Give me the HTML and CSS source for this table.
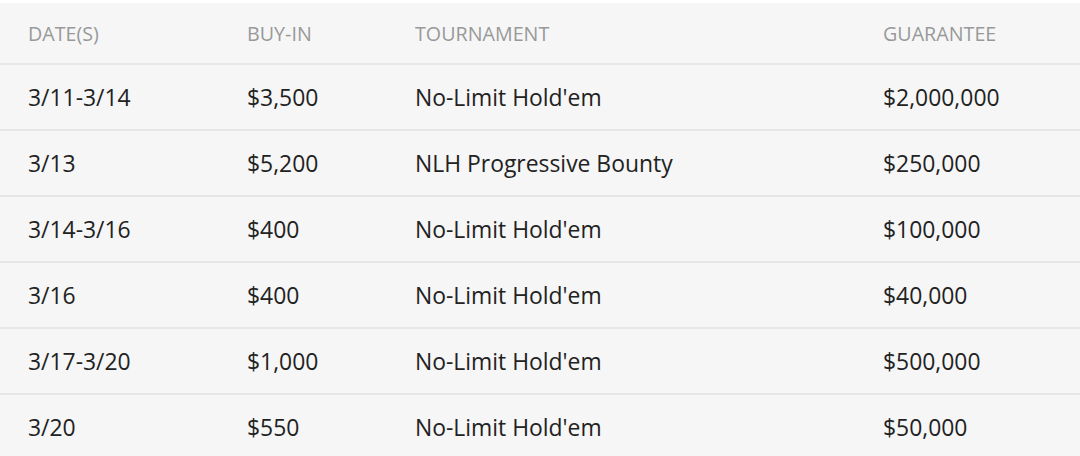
FILE: index.html
```html
<!DOCTYPE html>
<html>
<head>
<meta charset="utf-8">
<link rel="stylesheet" href="styles.css">
</head>
<body>
<div class="wrap">
<table class="schedule">
  <colgroup>
    <col class="c-date"><col class="c-buy"><col class="c-tour"><col class="c-guar">
  </colgroup>
  <thead>
    <tr><th>Date(s)</th><th>Buy-in</th><th>Tournament</th><th>Guarantee</th></tr>
  </thead>
  <tbody>
    <tr><td>3/11-3/14</td><td>$3,500</td><td>No-Limit Hold'em</td><td>$2,000,000</td></tr>
    <tr><td>3/13</td><td>$5,200</td><td>NLH Progressive Bounty</td><td>$250,000</td></tr>
    <tr><td>3/14-3/16</td><td>$400</td><td>No-Limit Hold'em</td><td>$100,000</td></tr>
    <tr><td>3/16</td><td>$400</td><td>No-Limit Hold'em</td><td>$40,000</td></tr>
    <tr><td>3/17-3/20</td><td>$1,000</td><td>No-Limit Hold'em</td><td>$500,000</td></tr>
    <tr><td>3/20</td><td>$550</td><td>No-Limit Hold'em</td><td>$50,000</td></tr>
  </tbody>
</table>
</div>
</body>
</html>
```
FILE: styles.css
```css
html, body {
  margin: 0;
  padding: 0;
  background: #ffffff;
}
.wrap {
  padding-top: 3px;
}
.schedule {
  width: 1080px;
  border-collapse: collapse;
  table-layout: fixed;
  background: #f6f6f6;
  font-family: "Open Sans", "Liberation Sans", sans-serif;
}
.c-date { width: 247px; }
.c-buy { width: 168px; }
.c-tour { width: 468px; }
.c-guar { width: 197px; }
.schedule th, .schedule td {
  text-align: left;
  padding: 0;
  white-space: nowrap;
}
.schedule th:first-child, .schedule td:first-child {
  padding-left: 28px;
}
.schedule th {
  height: 60px;
  font-size: 19.7px;
  font-weight: 400;
  color: #999999;
  text-transform: uppercase;
  border-bottom: 2px solid #e6e6e6;
}
.schedule td {
  height: 64px;
  font-size: 22.9px;
  color: #222222;
  border-bottom: 2px solid #e6e6e6;
}
```
